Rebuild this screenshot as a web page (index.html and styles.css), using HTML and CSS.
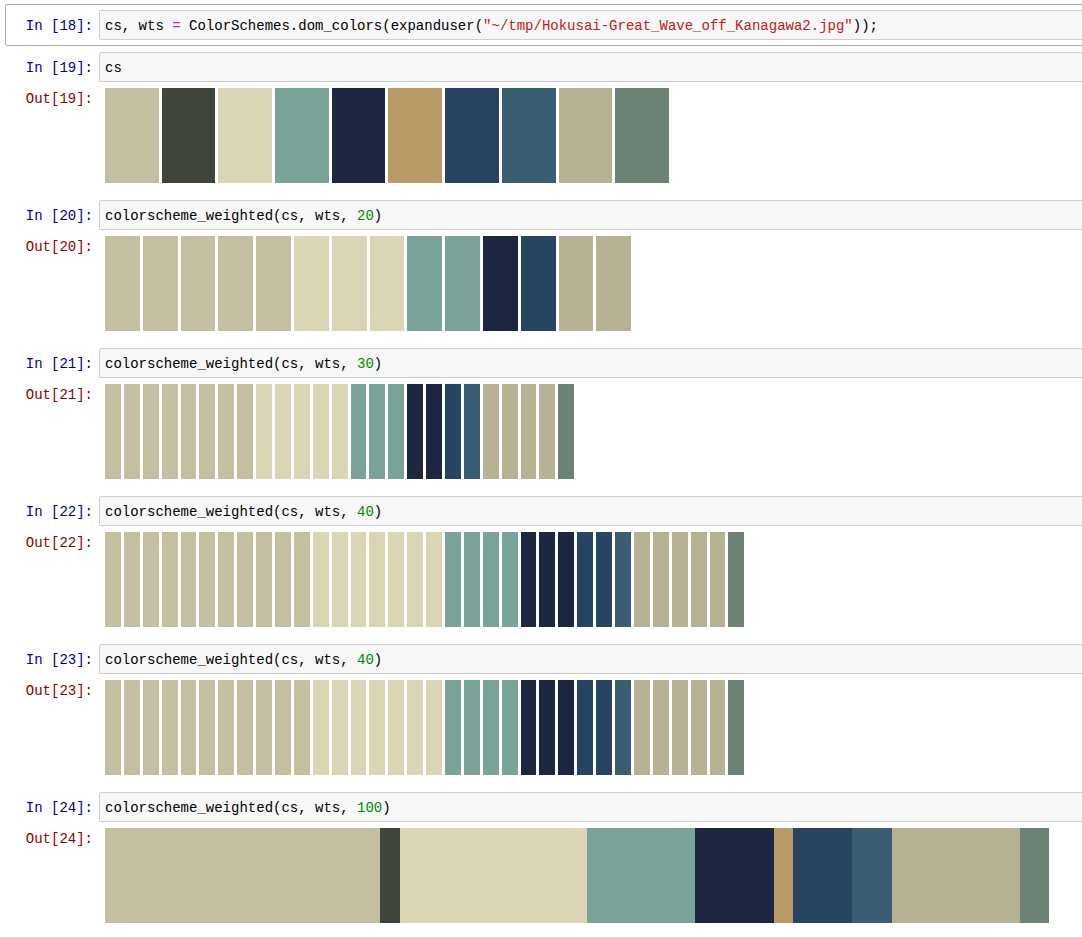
FILE: index.html
```html
<!DOCTYPE html>
<html lang="en">
<head>
<meta charset="utf-8">
<title>Notebook</title>
<link rel="stylesheet" href="styles.css">
</head>
<body>
<div class="notebook">

  <div class="cell selected">
    <div class="row">
      <div class="prompt in">In [18]:</div>
      <div class="input-area"><pre class="code">cs, wts <span class="op">=</span> ColorSchemes.dom_colors(expanduser(<span class="str">"~/tmp/Hokusai-Great_Wave_off_Kanagawa2.jpg"</span>));</pre></div>
    </div>
  </div>

  <div class="cell">
    <div class="row">
      <div class="prompt in">In [19]:</div>
      <div class="input-area"><pre class="code">cs</pre></div>
    </div>
    <div class="row">
      <div class="prompt out">Out[19]:</div>
      <div class="output-sub">
        <div class="swatches lg">
          <div class="sw c1"></div><div class="sw c2"></div><div class="sw c3"></div><div class="sw c4"></div><div class="sw c5"></div>
          <div class="sw c6"></div><div class="sw c7"></div><div class="sw c8"></div><div class="sw c9"></div><div class="sw c10"></div>
        </div>
      </div>
    </div>
  </div>

  <div class="cell">
    <div class="row">
      <div class="prompt in">In [20]:</div>
      <div class="input-area"><pre class="code">colorscheme_weighted(cs, wts, <span class="num">20</span>)</pre></div>
    </div>
    <div class="row">
      <div class="prompt out">Out[20]:</div>
      <div class="output-sub">
        <div class="swatches md">
          <div class="sw c1"></div><div class="sw c1"></div><div class="sw c1"></div><div class="sw c1"></div><div class="sw c1"></div>
          <div class="sw c3"></div><div class="sw c3"></div><div class="sw c3"></div>
          <div class="sw c4"></div><div class="sw c4"></div>
          <div class="sw c5"></div>
          <div class="sw c7"></div>
          <div class="sw c9"></div><div class="sw c9"></div>
        </div>
      </div>
    </div>
  </div>

  <div class="cell">
    <div class="row">
      <div class="prompt in">In [21]:</div>
      <div class="input-area"><pre class="code">colorscheme_weighted(cs, wts, <span class="num">30</span>)</pre></div>
    </div>
    <div class="row">
      <div class="prompt out">Out[21]:</div>
      <div class="output-sub">
        <div class="swatches sm">
          <div class="sw c1"></div><div class="sw c1"></div><div class="sw c1"></div><div class="sw c1"></div><div class="sw c1"></div><div class="sw c1"></div><div class="sw c1"></div><div class="sw c1"></div>
          <div class="sw c3"></div><div class="sw c3"></div><div class="sw c3"></div><div class="sw c3"></div><div class="sw c3"></div>
          <div class="sw c4"></div><div class="sw c4"></div><div class="sw c4"></div>
          <div class="sw c5"></div><div class="sw c5"></div>
          <div class="sw c7"></div>
          <div class="sw c8"></div>
          <div class="sw c9"></div><div class="sw c9"></div><div class="sw c9"></div><div class="sw c9"></div>
          <div class="sw c10"></div>
        </div>
      </div>
    </div>
  </div>

  <div class="cell">
    <div class="row">
      <div class="prompt in">In [22]:</div>
      <div class="input-area"><pre class="code">colorscheme_weighted(cs, wts, <span class="num">40</span>)</pre></div>
    </div>
    <div class="row">
      <div class="prompt out">Out[22]:</div>
      <div class="output-sub">
        <div class="swatches sm">
          <div class="sw c1"></div><div class="sw c1"></div><div class="sw c1"></div><div class="sw c1"></div><div class="sw c1"></div><div class="sw c1"></div><div class="sw c1"></div><div class="sw c1"></div><div class="sw c1"></div><div class="sw c1"></div><div class="sw c1"></div>
          <div class="sw c3"></div><div class="sw c3"></div><div class="sw c3"></div><div class="sw c3"></div><div class="sw c3"></div><div class="sw c3"></div><div class="sw c3"></div>
          <div class="sw c4"></div><div class="sw c4"></div><div class="sw c4"></div><div class="sw c4"></div>
          <div class="sw c5"></div><div class="sw c5"></div><div class="sw c5"></div>
          <div class="sw c7"></div><div class="sw c7"></div>
          <div class="sw c8"></div>
          <div class="sw c9"></div><div class="sw c9"></div><div class="sw c9"></div><div class="sw c9"></div><div class="sw c9"></div>
          <div class="sw c10"></div>
        </div>
      </div>
    </div>
  </div>

  <div class="cell">
    <div class="row">
      <div class="prompt in">In [23]:</div>
      <div class="input-area"><pre class="code">colorscheme_weighted(cs, wts, <span class="num">40</span>)</pre></div>
    </div>
    <div class="row">
      <div class="prompt out">Out[23]:</div>
      <div class="output-sub">
        <div class="swatches sm">
          <div class="sw c1"></div><div class="sw c1"></div><div class="sw c1"></div><div class="sw c1"></div><div class="sw c1"></div><div class="sw c1"></div><div class="sw c1"></div><div class="sw c1"></div><div class="sw c1"></div><div class="sw c1"></div><div class="sw c1"></div>
          <div class="sw c3"></div><div class="sw c3"></div><div class="sw c3"></div><div class="sw c3"></div><div class="sw c3"></div><div class="sw c3"></div><div class="sw c3"></div>
          <div class="sw c4"></div><div class="sw c4"></div><div class="sw c4"></div><div class="sw c4"></div>
          <div class="sw c5"></div><div class="sw c5"></div><div class="sw c5"></div>
          <div class="sw c7"></div><div class="sw c7"></div>
          <div class="sw c8"></div>
          <div class="sw c9"></div><div class="sw c9"></div><div class="sw c9"></div><div class="sw c9"></div><div class="sw c9"></div>
          <div class="sw c10"></div>
        </div>
      </div>
    </div>
  </div>

  <div class="cell">
    <div class="row">
      <div class="prompt in">In [24]:</div>
      <div class="input-area"><pre class="code">colorscheme_weighted(cs, wts, <span class="num">100</span>)</pre></div>
    </div>
    <div class="row">
      <div class="prompt out">Out[24]:</div>
      <div class="output-sub">
        <div class="swatches bar">
          <div class="seg c1" style="flex: 28"></div>
          <div class="seg c2" style="flex: 2"></div>
          <div class="seg c3" style="flex: 19"></div>
          <div class="seg c4" style="flex: 11"></div>
          <div class="seg c5" style="flex: 8"></div>
          <div class="seg c6" style="flex: 2"></div>
          <div class="seg c7" style="flex: 6"></div>
          <div class="seg c8" style="flex: 4"></div>
          <div class="seg c9" style="flex: 13"></div>
          <div class="seg c10" style="flex: 3"></div>
        </div>
      </div>
    </div>
  </div>

</div>
</body>
</html>
```

FILE: styles.css
```css
html, body {
  margin: 0;
  padding: 0;
  background: #ffffff;
  overflow: hidden;
}

body {
  font-family: "Liberation Mono", "DejaVu Sans Mono", monospace;
  font-size: 14px;
  color: #000000;
}

.notebook {
  width: 1120px;
  padding: 4px 0 0 5px;
}

.cell {
  border: 1px solid transparent;
  border-radius: 2px;
  padding: 5px;
}

.cell.selected {
  border-color: #ababab;
}

.row {
  display: flex;
  align-items: flex-start;
}

.prompt {
  width: 88px;
  flex: none;
  box-sizing: border-box;
  padding: 7px 6px 0 0;
  text-align: right;
  line-height: 18px;
  white-space: pre;
}

.prompt.in {
  color: #000080;
}

.prompt.out {
  color: #8b0000;
  padding-top: 8px;
}

.input-area {
  flex: 1;
  background: #f7f7f7;
  border: 1px solid #cfcfcf;
  border-radius: 2px;
  padding: 6px 5px 4px;
}

.code {
  margin: 0;
  font-family: inherit;
  font-size: 14px;
  line-height: 18px;
  white-space: pre;
}

.op { color: #aa22ff; }
.str { color: #ba2121; }
.num { color: #008800; }

.output-sub {
  flex: 1;
  padding: 6px 0 5px 6px;
}

.swatches {
  display: flex;
  height: 95px;
  column-gap: 3px;
}

.sw {
  flex: none;
  height: 100%;
}

.swatches.lg .sw { width: 53.7px; }
.swatches.md .sw { width: 34.8px; }
.swatches.sm .sw { width: 15.9px; }

.swatches.bar {
  width: 944px;
  column-gap: 0;
}

.seg {
  height: 100%;
}

.c1 { background: #c4bfa1; }
.c2 { background: #3f453b; }
.c3 { background: #dad5b5; }
.c4 { background: #79a298; }
.c5 { background: #1c2641; }
.c6 { background: #b99b68; }
.c7 { background: #274562; }
.c8 { background: #395d72; }
.c9 { background: #b6b193; }
.c10 { background: #6b8274; }
```
